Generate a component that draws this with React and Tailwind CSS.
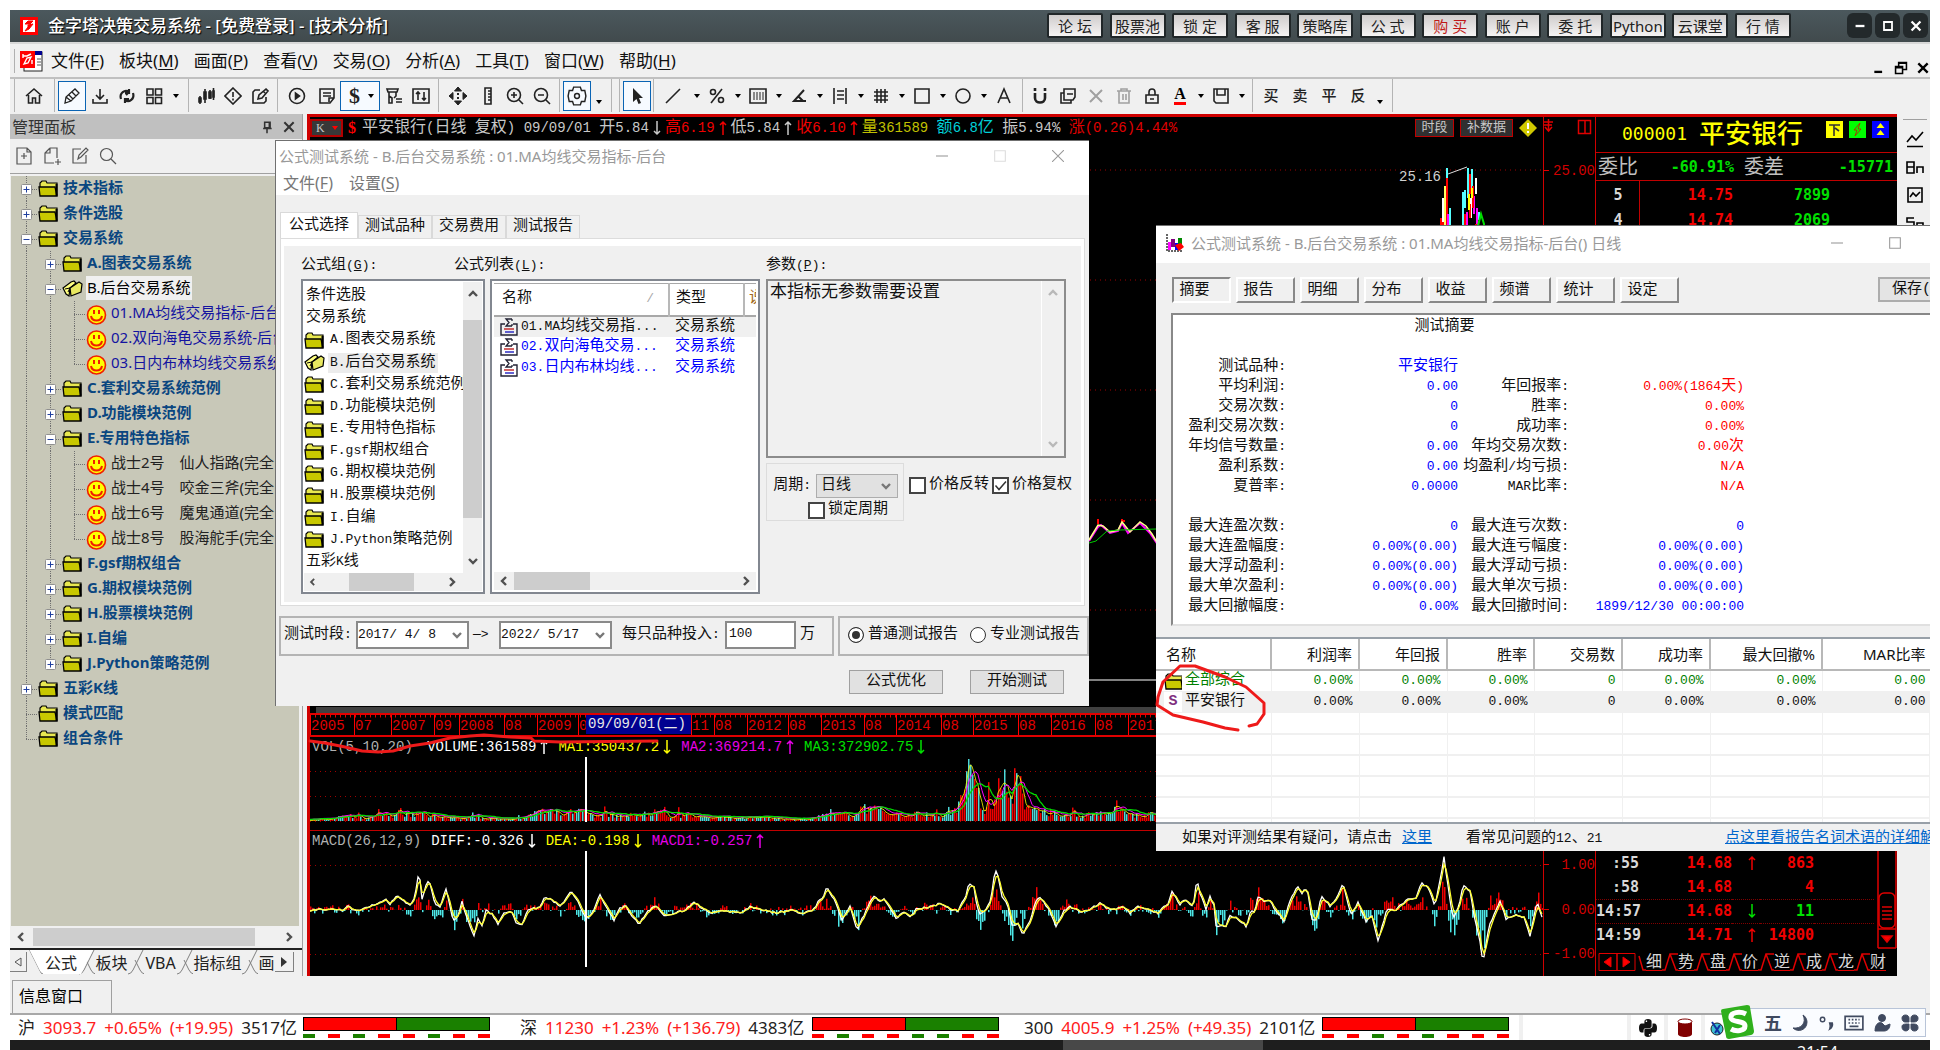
import React, { useState } from 'react';
import clsx from 'clsx';

/* ---------- text helpers ---------- */

// latin text keeps the parent's mono size, CJK runs get their own size
const T = ({ s, cjk = 'text-[15px]' }) => (
  <>
    {s.split(/([\u3000-\u9fff\uff00-\uffef]+)/).map((part, i) =>
      i % 2 ? <span key={i} className={cjk}>{part}</span> : part
    )}
  </>
);

// "文件(F)" with the access key underlined
const Key = ({ label, k }) => (
  <>{label}(<span className="underline underline-offset-2">{k}</span>)</>
);

/* ---------- icons ---------- */

const Ic = ({ children, className = 'w-[18px] h-[18px]', sw = 1.6 }) => (
  <svg viewBox="0 0 18 18" className={className} fill="none" stroke="currentColor" strokeWidth={sw}>
    {children}
  </svg>
);

const Caret = () => (
  <svg viewBox="0 0 8 8" className="w-2 h-2"><path d="M1 2h6L4 6z" /></svg>
);

const Chevron = ({ dir, className = 'text-[#505050]' }) => {
  const d = {
    left: 'M8 2L4 6l4 4',
    right: 'M4 2l4 4-4 4',
    up: 'M2 8l4-4 4 4',
    down: 'M2 4l4 4 4-4',
  }[dir];
  return (
    <svg viewBox="0 0 12 12" className={clsx('w-3 h-3', className)} fill="none" stroke="currentColor" strokeWidth="2.4">
      <path d={d} />
    </svg>
  );
};

const Folder = () => (
  <svg viewBox="0 0 21 17" className="w-[21px] h-[17px] shrink-0">
    <path d="M2 8V3l2-2h4l1 2h10v12H3z" fill="#e8e850" stroke="#000" strokeWidth="1.2" />
    <path d="M1 7h16l2 9H2z" fill="#c8c800" stroke="#000" strokeWidth="1.3" />
    <path d="M18.500 4v12" stroke="#000" strokeWidth="2" />
  </svg>
);

const FolderOpen = () => (
  <svg viewBox="0 0 21 17" className="w-[21px] h-[17px] shrink-0">
    <path d="M1 8l8-6 3-1 2 2-6 5-1 8-3-2z" fill="#ffff80" stroke="#000" strokeWidth="1.2" />
    <path d="M8 8l9-6 3 2-1 8-10 4z" fill="#e8e860" stroke="#000" strokeWidth="1.2" />
    <path d="M3 9l5-1M6 12l2-4" stroke="#000" />
  </svg>
);

const Smiley = () => (
  <svg viewBox="0 0 21 21" className="w-[21px] h-[21px] shrink-0 mt-1">
    <circle cx="10.5" cy="10" r="9" fill="#ffff00" stroke="#f02000" strokeWidth="1.6" />
    <path d="M8 5v4M13 5v4M5 11c1 6 10 6 11 0" stroke="#f02000" strokeWidth="2" fill="none" />
  </svg>
);

const Sigma = () => (
  <svg viewBox="0 0 18 18" className="w-[18px] h-[18px] shrink-0" fill="none">
    <path d="M5 6H1v11h16V6h-4" stroke="#223" strokeWidth="1.4" />
    <path d="M12 1H6l3 3.500L6 8h6M12 1v2M12 8V6" stroke="#223" strokeWidth="1.3" />
    <path d="M4 11h10" stroke="#c02020" strokeWidth="1.4" />
    <path d="M5 14h9" stroke="#2020c0" strokeWidth="1.4" />
  </svg>
);

const icons = {
  home: <Ic><path d="M1 9l8-7 8 7M3.500 8v8h4v-5h3v5h4V8" /></Ic>,
  pen: <Ic sw={1.3}><path d="M2 16l1-6 9-8 4 4-8 8zM3 10l5 4M6 8l4 4M9 5l4 4" /></Ic>,
  down: <Ic><path d="M9 2v10M5 8l4 4 4-4M2 12v4h14v-4" /></Ic>,
  sync: <Ic sw={2.2}><path d="M3 12C1 6 7 2 11 5M11 2v4H7M15 6c2 6-4 10-8 7M7 16v-4h4M8 8l3-3" /></Ic>,
  grid: <Ic><path d="M2 2h6v6H2zM10.500 2h6v6h-6zM2 10.500h6v6H2zM10.500 10.500h6v6h-6z" /></Ic>,
  candle: <Ic><path d="M3 9v8M8 2v14M13 3v9M16.500 1v12" /><path d="M2 11h2v4H2zM7 5h2v7H7zM12 5h2v6h-2zM16 4h1v6h-1z" fill="currentColor" /></Ic>,
  alert: <Ic><path d="M9 1l8 8-8 8-8-8zM9 5v5M9 11.500v2" /></Ic>,
  edit: <Ic><path d="M9 3H4L2 5v11h11l2-2v-4M7 12l1-4 7-6 2 2-6 7zM12 4l2 2" /></Ic>,
  play: <Ic><circle cx="9" cy="9" r="7.500" /><path d="M7.500 6v6l4-3z" fill="currentColor" /></Ic>,
  note: <Ic><path d="M2 2h14v9l-4 5H2zM5 6h8M5 9h8M11 15v-4h5" /></Ic>,
  filter: <Ic><path d="M2 2h11l-1 3H3zM4 5v4l3 2v5H4V9M11 5v4l-2 2M11 12h6M11 15h6" /></Ic>,
  sort: <Ic><path d="M1 2h16v14H1zM6 13V5M4 7l2-2 2 2M12 5v8M10 11l2 2 2-2" /></Ic>,
  move: (
    <Ic sw={1}>
      <path d="M9 0l3.500 4h-7zM9 18l3.500-4h-7zM0 9l4-3.500v7zM18 9l-4-3.500v7z" fill="currentColor" />
      <path d="M8 6h2v2H8zM8 10h2v2H8z" fill="currentColor" stroke="none" />
    </Ic>
  ),
  ruler: <Ic><path d="M6 1h6v16H6zM9 4h3M9 7h3M9 10h3M9 13h3" /></Ic>,
  zin: <Ic><circle cx="8" cy="8" r="6.500" /><path d="M8 5v6M5 8h6M13 13l4 4" /></Ic>,
  zout: <Ic><circle cx="8" cy="8" r="6.500" /><path d="M5 8h6M13 13l4 4" /></Ic>,
  gear: <Ic className="w-5 h-5" sw={1.3}><path d="M6 1h6l1 3 3 0 1 5-1 5-3 0-1 3H6l-1-3-3 0-1-5 1-5 3 0z" /><circle cx="9" cy="9" r="2.200" /></Ic>,
  cursor: <Ic><path d="M5 1v14l3.500-3 2 5 2.500-1-2-5h4z" fill="currentColor" stroke="none" /></Ic>,
  line: <Ic><path d="M2 16L16 2" /></Ic>,
  percent: <Ic><path d="M3 16L14 2" /><circle cx="5" cy="5" r="2.500" /><circle cx="13" cy="13" r="2.500" /></Ic>,
  bars: <Ic><path d="M1 2h16v14H1z" /><path d="M5 5v8M8 5v8M11 5v8M14 5v8" strokeWidth="1" /></Ic>,
  angle: <Ic sw={2}><path d="M14 3L4 14h12M8 9l5 5" /></Ic>,
  levels: <Ic><path d="M3 1v16M15 1v16M6 4h7M6 8h7M6 12h7" /></Ic>,
  hash: <Ic><path d="M5 2v14M9 2v14M13 2v14M2 5h14M2 9h14M2 13h14" /></Ic>,
  rect: <Ic><path d="M2 2h14v14H2z" /></Ic>,
  circle: <Ic><circle cx="9" cy="9" r="7" /></Ic>,
  text: <Ic><path d="M3 16L9 2l6 14M5 11h8" /></Ic>,
  magnet: <Ic sw={2.6}><path d="M4 6v5c0 6 10 6 10 0V6M4 1v3M14 1v3" /></Ic>,
  copy: <Ic><path d="M5 6H2v10h10v-3" /><path d="M5 2h11v8l-2 3H5zM8 7h6" /></Ic>,
  cross: <Ic sw={2}><path d="M3 3l12 12M15 3L3 15" /></Ic>,
  trash: <Ic><path d="M2 4h14M6 4V2h6v2M4 4v12h10V4M8 7v6M11 7v6" /></Ic>,
  lock: <Ic><path d="M3 8h12v8H3zM6 8V5c0-4 6-4 6 0v3M7 12h4" /></Ic>,
  save: <Ic><path d="M2 2h14v14H4l-2-2zM5 2v6h8V2" /></Ic>,
};

/* ---------- top bars ---------- */

const TITLE_BUTTONS = ['论 坛', '股票池', '锁 定', '客 服', '策略库', '公 式', '购 买', '账 户', '委 托', 'Python', '云课堂', '行 情'];

const TitleBar = () => (
  <header className="flex h-[34px] shrink-0 items-center border-b-2 border-[#d8d8d8] bg-linear-to-b from-[#4b585d] to-[#414a4d] pb-px pl-2.5 pr-0.5">
    <svg viewBox="0 0 18 18" className="w-[18px] h-[18px]">
      <rect width="18" height="18" fill="#f00" />
      <rect x="3" y="3" width="12" height="12" fill="#fff" />
      <path d="M5 7l3-3 5 0-3 3zM5 14l3-4 0-2 5-1-4 5z" fill="#f00" stroke="#f00" />
    </svg>
    <h1 className="ml-2.5 text-[17px] font-medium leading-8 text-white [text-shadow:1px_1px_1px_#000]">
      金字塔决策交易系统 - [免费登录] - [技术分析]
    </h1>
    <div className="ml-auto flex w-[744px] justify-between">
      {TITLE_BUTTONS.map((t) => (
        <button
          key={t}
          className={clsx(
            'h-[25px] w-14 overflow-hidden rounded-xs border-2 border-[#202628] bg-linear-to-b from-[#cfcccc] to-[#f6f4f4] text-[15px] leading-5 whitespace-nowrap',
            t === '购 买' ? 'text-[#c01818]' : 'text-[#222]'
          )}
        >
          {t}
        </button>
      ))}
    </div>
    <div className="ml-14 flex gap-[3px] text-white">
      <button aria-label="最小化" className="flex h-[25px] w-[25px] items-center justify-center rounded-md bg-[#23292b]">
        <Ic className="w-4 h-4" sw={2.6}><path d="M4 9h10" /></Ic>
      </button>
      <button aria-label="最大化" className="flex h-[25px] w-[25px] items-center justify-center rounded-md bg-[#23292b]">
        <Ic className="w-4 h-4" sw={2}><path d="M4.500 4.500h9v9h-9z" /></Ic>
      </button>
      <button aria-label="关闭" className="flex h-[25px] w-[25px] items-center justify-center rounded-md bg-[#23292b]">
        <Ic className="w-4 h-4" sw={2.6}><path d="M4 4l10 10M14 4L4 14" /></Ic>
      </button>
    </div>
  </header>
);

const MENUS = [['文件', 'F'], ['板块', 'M'], ['画面', 'P'], ['查看', 'V'], ['交易', 'O'], ['分析', 'A'], ['工具', 'T'], ['窗口', 'W'], ['帮助', 'H']];

const MenuBar = () => (
  <nav className="flex h-[35px] shrink-0 items-center border-b-2 border-[#c0c0c0] pl-1">
    <div className="h-6 w-px bg-[#b0b0b0]" />
    <svg viewBox="0 0 24 22" className="ml-1 w-6 h-[22px]">
      <rect x="5" y="2" width="18" height="19" fill="#fff" stroke="#222" />
      <rect x="5" y="1" width="18" height="4" fill="#000090" />
      <rect x="1" y="1" width="15" height="17" fill="#f00" />
      <path d="M4 6h4l4-2M5 14l3-6 4-1-3 6zM4 4v4M13 10v4" stroke="#fff" strokeWidth="1.4" fill="none" />
      <path d="M18 9h4M18 12h4M18 15h4" stroke="#555" />
    </svg>
    <div className="ml-2 flex gap-[15px] text-[17px] leading-6 text-[#111]">
      {MENUS.map(([label, k]) => (
        <button key={k}><Key label={label} k={k} /></button>
      ))}
    </div>
    <div className="ml-auto flex items-end gap-2 self-end pb-0.5">
      <Ic className="w-3.5 h-3.5" sw={3}><path d="M3 14h10" /></Ic>
      <Ic className="w-3.5 h-3.5" sw={2}><path d="M6 6V2h10v9h-4M2 7h9v9H2zM2 8.500h9M6 3h10" /></Ic>
      <Ic className="w-3.5 h-3.5" sw={3}><path d="M3 3l12 12M15 3L3 15" /></Ic>
    </div>
  </nav>
);

const Sep = ({ w = 'w-2' }) => (
  <div className={clsx('flex shrink-0 self-stretch justify-center', w)}><div className="w-px bg-[#b4b4b4]" /></div>
);
const Tool = ({ name, on, off, w = 'w-[27px]' }) => (
  <button
    aria-label={name}
    className={clsx('flex h-[30px] shrink-0 items-center justify-center', w, on && 'border border-[#0a64b4] bg-[#f6faff]', off && 'text-[#a0a0a0]')}
  >
    {icons[name]}
  </button>
);
const Drop = ({ w = 'w-[13px]', low }) => (
  <span className={clsx('flex shrink-0 justify-center', w, low && 'mt-3')}><Caret /></span>
);

const Toolbar = () => (
  <div className="flex h-[35px] shrink-0 items-center pb-0.5 text-[#222]">
    <Sep />
    <Tool name="home" w="w-8" />
    <Sep />
    <Tool name="pen" w="w-7" on />
    <Tool name="down" />
    <Tool name="sync" />
    <Tool name="grid" w="w-7" />
    <Drop w="w-4" />
    <Sep />
    <Tool name="candle" />
    <Tool name="alert" />
    <Tool name="edit" />
    <Sep />
    <Tool name="play" w="w-8" />
    <Tool name="note" />
    <button aria-label="交易" className="flex h-[30px] w-10 shrink-0 items-center justify-between border border-[#0a64b4] bg-[#f6faff] pl-2 pr-1 font-['Liberation_Serif','Noto_Sans_CJK_SC',serif] text-[22px] font-bold leading-7">
      $<Caret />
    </button>
    <Tool name="filter" />
    <Tool name="sort" />
    <Sep />
    <Tool name="move" w="w-8" />
    <Tool name="ruler" />
    <Tool name="zin" />
    <Tool name="zout" />
    <Sep />
    <Tool name="gear" w="w-7" on />
    <Drop w="w-4" low />
    <Sep />
    <Sep />
    <Tool name="cursor" w="w-7" on />
    <Sep w="w-1" />
    <Tool name="line" w="w-9" />
    <Drop w="w-3" />
    {['percent', 'bars', 'angle', 'levels', 'hash', 'rect', 'circle'].map((n) => (
      <React.Fragment key={n}>
        <Tool name={n} w="w-7" />
        <Drop />
      </React.Fragment>
    ))}
    <Tool name="text" w="w-7" />
    <Sep />
    <Tool name="magnet" w="w-7" />
    <Tool name="copy" w="w-7" />
    <Tool name="cross" w="w-7" off />
    <Tool name="trash" w="w-7" off />
    <Tool name="lock" w="w-7" />
    <button aria-label="颜色" className="flex w-7 shrink-0 justify-center">
      <span className="border-b-3 border-[#f00] font-['Liberation_Serif','Noto_Sans_CJK_SC',serif] text-base font-bold leading-4 text-black">A</span>
    </button>
    <Drop />
    <Tool name="save" w="w-7" />
    <Drop />
    <Sep />
    {['买', '卖', '平', '反'].map((t) => (
      <button key={t} className="ml-px w-7 shrink-0 text-[15px] font-medium">{t}</button>
    ))}
    <Drop w="w-4" low />
    <Sep />
  </div>
);

/* ---------- left panel ---------- */

const TREE = [
  { d: 0, t: '技术指标', x: '+' },
  { d: 0, t: '条件选股', x: '+' },
  { d: 0, t: '交易系统', x: '-' },
  { d: 1, t: 'A.图表交易系统', x: '+' },
  { d: 1, t: 'B.后台交易系统', x: '-', open: true },
  { d: 2, t: '01.MA均线交易指标-后台', blue: true },
  { d: 2, t: '02.双向海龟交易系统-后台', blue: true },
  { d: 2, t: '03.日内布林均线交易系统', blue: true, last: true },
  { d: 1, t: 'C.套利交易系统范例', x: '+' },
  { d: 1, t: 'D.功能模块范例', x: '+' },
  { d: 1, t: 'E.专用特色指标', x: '-' },
  { d: 2, t: '战士2号　仙人指路(完全' },
  { d: 2, t: '战士4号　咬金三斧(完全' },
  { d: 2, t: '战士6号　魔鬼通道(完全' },
  { d: 2, t: '战士8号　股海舵手(完全', last: true },
  { d: 1, t: 'F.gsf期权组合', x: '+' },
  { d: 1, t: 'G.期权模块范例', x: '+' },
  { d: 1, t: 'H.股票模块范例', x: '+' },
  { d: 1, t: 'I.自编', x: '+' },
  { d: 1, t: 'J.Python策略范例', x: '+', last: true },
  { d: 0, t: '五彩K线', x: '+' },
  { d: 0, t: '模式匹配' },
  { d: 0, t: '组合条件', last: true },
];

const Branch = ({ x, last, pass }) => (
  <svg className="w-6 h-[25px] shrink-0" fill="none" stroke="#707070" strokeDasharray="1 1">
    <path d={`M12.500 0V${last ? 13 : 25}${pass ? '' : 'M12 13.500h12'}`} />
    {x && (
      <g strokeDasharray="none">
        <rect x="7.500" y="8.500" width="10" height="10" rx="1" fill="#fff" stroke="#909090" />
        <path d={x === '+' ? 'M9.500 13.500h6M12.500 10.500v6' : 'M9.500 13.500h6'} stroke="#2040a0" />
      </g>
    )}
  </svg>
);

const Tree = () => (
  <ul className="min-h-0 flex-1 overflow-hidden bg-[#c8c8b8] pl-[3px] text-[15px] leading-[22px]">
    {TREE.map((n) => (
      <li key={n.t} className="flex h-[25px] whitespace-nowrap">
        {Array.from({ length: n.d }, (_, i) => <Branch key={i} pass />)}
        <Branch x={n.x} last={n.last} />
        <span className="flex w-[21px] items-center">{n.d === 2 ? <Smiley /> : n.open ? <FolderOpen /> : <Folder />}</span>
        <span
          className={clsx(
            'ml-[3px] h-6 px-px',
            n.open && 'bg-[#f0f0f0] text-black',
            !n.open && n.d < 2 && 'font-bold text-[#0a4680]',
            n.blue && 'text-[#1414a0]',
            n.d === 2 && !n.blue && 'text-[#222]'
          )}
        >
          {n.t}
        </span>
      </li>
    ))}
  </ul>
);

const Slash = ({ first }) => (
  <svg className="w-4 h-[25px] shrink-0" fill="none" stroke="#808080">
    {!first && <path d="M15 0L5 20q-2 4-5 4" />}
    <path d={first ? 'M2 0l10 20q2 4 4 4' : 'M7 10l5 10q2 4 5 4'} />
  </svg>
);

const SidePanel = () => (
  <aside className="flex w-[293px] shrink-0 flex-col border-r border-[#a0a0a0]">
    <div className="flex h-[25px] items-center bg-[#c0c0c0] pl-0.5 text-[#333]">
      <span className="text-base leading-6">管理面板</span>
      <button aria-label="固定" className="ml-auto mr-2"><Ic className="w-3.5 h-3.5" sw={2}><path d="M6 3h7v7H6zM4 11h11M9 11v6M12 3v7" /></Ic></button>
      <button aria-label="关闭" className="mr-1.5"><Ic className="w-3.5 h-3.5" sw={2.6}><path d="M3 3l12 12M15 3L3 15" /></Ic></button>
    </div>
    <div className="flex h-[35px] items-center gap-2.5 border-b border-[#a0a0a0] pb-px pl-[5px] text-[#555]">
      <Ic sw={1.2}><path d="M2 1h10l4 4v12H2zM12 1v4h4M9 6v6M6 9h6" /></Ic>
      <Ic sw={1.2}><path d="M7 1h7v10M7 1L2 6v10h9M7 1v5H2M15 12v6M12 15h6" /></Ic>
      <Ic sw={1.2}><path d="M10 2H2v14h13V8M7 12l1-4 7-7 2 2-7 7z" /></Ic>
      <Ic sw={1.2}><circle cx="7.500" cy="7.500" r="6" /><path d="M12 12l5 5" /></Ic>
    </div>
    <div className="mx-px mt-0.5 flex min-h-0 flex-1 flex-col pr-0.5">
      <Tree />
      <div className="flex h-[22px] items-center gap-1.5 px-1">
        <Chevron dir="left" />
        <div className="h-[18px] w-[222px] bg-[#cdcdcd]" />
        <span className="ml-auto"><Chevron dir="right" /></span>
      </div>
    </div>
    <div className="flex h-[28px] items-start overflow-hidden border-t-2 border-[#222] text-base leading-6 text-[#222]">
      <button aria-label="向左" className="mt-0.5 flex h-5 w-[17px] shrink-0 items-center justify-center border-b border-r border-[#808080]">
        <svg viewBox="0 0 8 10" className="w-2 h-2.5" fill="none" stroke="#555"><path d="M7 1v8L1 5z" /></svg>
      </button>
      <div className="flex bg-white [clip-path:polygon(2px_0,66px_0,54px_24px,14px_24px)]">
        <Slash first />
        <button className="w-9">公式</button>
        <span className="w-4" />
      </div>
      <span className="-ml-4 flex">
        <Slash />
        <button className="w-[33px]">板块</button>
        <Slash />
        <button className="w-[33px]">VBA</button>
        <Slash />
        <button className="w-[49px]">指标组</button>
        <Slash />
        <button className="w-[17px] overflow-hidden">画</button>
      </span>
      <button aria-label="向右" className="mt-0.5 flex h-5 w-[19px] shrink-0 items-center justify-center border-b border-r border-[#808080]">
        <svg viewBox="0 0 8 10" className="w-2 h-2.5"><path d="M1 0v10l6-5z" fill="#333" /></svg>
      </button>
    </div>
  </aside>
);

/* ---------- charts ---------- */

const makeRand = (seed) => () => {
  seed = (seed * 16807) % 2147483647;
  return seed / 2147483647;
};

const sample = (pts, x) => {
  for (let i = 1; i < pts.length; i++) {
    if (x <= pts[i][0]) {
      const [x0, y0] = pts[i - 1];
      const [x1, y1] = pts[i];
      return y0 + ((y1 - y0) * (x - x0)) / (x1 - x0);
    }
  }
  return pts[pts.length - 1][1];
};

const toLine = (arr, step, f) => arr.map((v, i) => `${i * step},${f(v).toFixed(1)}`).join(' ');
const movingAvg = (arr, n) => arr.map((_, i) => {
  const s = arr.slice(Math.max(0, i - n + 1), i + 1);
  return s.reduce((a, b) => a + b, 0) / s.length;
});

const VOL_PTS = [[0, 1], [20, 2], [30, 5], [38, 9], [45, 6], [55, 3], [72, 8], [90, 8], [110, 11], [125, 6], [150, 4], [162, 5], [190, 2], [210, 3], [220, 10], [230, 14], [240, 12], [255, 13], [272, 11], [282, 7], [310, 8], [330, 8], [345, 13], [362, 5], [380, 9], [395, 4], [430, 4], [450, 5], [480, 2], [503, 3], [520, 11], [530, 13], [542, 7], [552, 16], [562, 19], [572, 14], [590, 7], [610, 9], [630, 7], [643, 12], [650, 24], [657, 60], [665, 42], [675, 14], [685, 28], [692, 54], [700, 36], [707, 58], [714, 20], [730, 13], [750, 10], [770, 6], [792, 12], [810, 14], [822, 7], [846, 9], [1233, 14]];

const MACD_PTS = [[310, 909], [330, 908], [342, 909], [348, 905], [352, 908], [360, 910], [370, 905], [380, 902], [386, 899], [390, 903], [397, 895], [403, 900], [410, 905], [415, 895], [419, 869], [422, 898], [427, 880], [430, 882], [435, 904], [440, 906], [446, 888], [450, 905], [453, 920], [458, 915], [462, 900], [465, 912], [470, 925], [474, 934], [478, 918], [482, 925], [486, 910], [492, 913], [498, 923], [504, 912], [512, 911], [516, 922], [522, 923], [528, 909], [540, 906], [545, 896], [552, 899], [560, 905], [565, 899], [571, 891], [577, 898], [582, 910], [587, 918], [592, 912], [600, 894], [606, 905], [614, 919], [620, 907], [626, 905], [632, 915], [639, 923], [648, 910], [656, 905], [664, 914], [675, 912], [685, 909], [694, 901], [704, 909], [712, 912], [720, 910], [740, 912], [750, 906], [760, 908], [775, 912], [795, 909], [801, 914], [810, 909], [815, 908], [818, 901], [823, 896], [827, 886], [831, 894], [835, 900], [842, 920], [850, 905], [857, 929], [865, 912], [873, 895], [880, 900], [884, 898], [890, 907], [896, 917], [905, 911], [911, 916], [916, 908], [935, 905], [940, 902], [950, 908], [958, 910], [963, 900], [966, 895], [969, 882], [974, 886], [977, 905], [980, 913], [985, 910], [990, 900], [993, 885], [995, 868], [998, 875], [1002, 895], [1008, 905], [1012, 925], [1018, 923], [1023, 933], [1030, 920], [1035, 902], [1040, 896], [1045, 903], [1050, 910], [1056, 925], [1064, 910], [1070, 906], [1082, 911], [1092, 907], [1100, 902], [1107, 908], [1115, 909], [1123, 905], [1130, 912], [1138, 906], [1150, 909], [1158, 912], [1163, 906], [1169, 902], [1171, 890], [1175, 895], [1179, 904], [1185, 898], [1193, 906], [1197, 878], [1200, 892], [1206, 908], [1210, 895], [1214, 905], [1216, 925], [1226, 925], [1230, 914], [1238, 918], [1247, 926], [1250, 911], [1255, 910], [1258, 896], [1264, 900], [1270, 899], [1275, 909], [1284, 920], [1290, 900], [1297, 885], [1302, 892], [1307, 887], [1312, 918], [1317, 918], [1321, 895], [1330, 905], [1336, 898], [1343, 882], [1351, 915], [1358, 902], [1366, 920], [1372, 915], [1378, 940], [1387, 908], [1395, 910], [1403, 902], [1409, 898], [1416, 897], [1421, 882], [1428, 886], [1435, 905], [1440, 880], [1444, 856], [1448, 885], [1453, 918], [1459, 905], [1463, 883], [1470, 890], [1474, 915], [1480, 940], [1483, 962], [1489, 925], [1500, 900], [1506, 918], [1515, 914], [1524, 917], [1530, 935], [1537, 900], [1543, 920]];

const Grid = ({ ys }) => ys.map((y) => (
  <line key={y} x1="0" x2="100%" y1={y} y2={y} stroke="#a00000" strokeDasharray="1 4" />
));

const PriceChart = () => (
  <svg className="min-h-0 w-full flex-1" fill="none">
    <Grid ys={[32, 142, 252, 362, 472]} />
    <g strokeWidth="2">
      <path d="M1131 100V80M1133 100V60M1137 100V38" stroke="#f00" />
      <path d="M1135 100V48M1140 100V84" stroke="#ffff60" />
      <path d="M1133 84V60M1161 80V60M1166 56V40" stroke="#fff" />
      <path d="M1137 40V30M1140 100V70M1153 88V54M1155 70V52M1158 60V30M1162 50V31M1169 82V74" stroke="#5ff" />
      <path d="M1138 90V76M1157 100V74M1164 76V58M1167 92V70" stroke="#f0f" />
      <path d="M1155 100V76M1160 56V36M1160 80V66M1163 70V48M1166 100V86" stroke="#f00" />
      <path d="M1159 72V56M1162 60V50M1153 100V90" stroke="#ff0" />
      <path d="M1168 88L1171 76L1174 86V100" stroke="#0d0" />
    </g>
    <path d="M1138 36L1157 29" stroke="#ddd" />
    <text x="1089" y="43" fill="#d0d0d0" fontSize="14" fontFamily="Liberation Mono, monospace">25.16</text>
    <path d="M779 403L788 389L791 387L800 395L808 393L812 385L818 395L830 385L835 390L840 395L848 407" stroke="#f0f" strokeWidth="2" />
    <path d="M788 386V381M812 384V381M814 384V382" stroke="#f00" strokeWidth="2" />
    <path d="M779 402L788 387L793 388L800 394L808 392L812 384L820 394L830 384L836 388L842 396L848 406" stroke="#ff8" strokeWidth="1.5" />
    <path d="M779 405L786 403L797 393L810 392L846 391" stroke="#0c0" />
    <path d="M0 542H1233" stroke="#808080" strokeWidth="2" />
  </svg>
);

const TICKS = [[0, '2005'], [44, '07'], [81, '2007'], [124, '09'], [149, '2008'], [194, '08'], [227, '2009'], [268, '0'], [381, '11'], [404, '08'], [437, '2012'], [478, '08'], [511, '2013'], [554, '08'], [586, '2014'], [631, '08'], [663, '2015'], [708, '08'], [741, '2016'], [785, '08'], [818, '2017']];

const TimeAxis = () => (
  <svg className="h-[24px] w-full shrink-0 border-y-2 border-[#e00000]">
    <line x1="0" x2="100%" y1="1" y2="1" stroke="#e00000" strokeWidth="3" strokeDasharray="1 4" />
    {TICKS.map(([x, t]) => (
      <g key={x}>
        <line x1={x + 0.5} x2={x + 0.5} y1="0" y2="20" stroke="#f00" />
        <text x={x + 1} y="15" fill="#e00000" fontSize="14" fontFamily="Liberation Mono, monospace">{t}</text>
      </g>
    ))}
    <rect x="276" y="0" width="105" height="19" fill="#000090" />
    <text x="278" y="13" fill="#e8e8e8" fontSize="14" fontFamily="Liberation Mono, Noto Sans CJK SC, monospace">09/09/01(二)</text>
  </svg>
);

const VolumeChart = () => {
  const rand = makeRand(77);
  const vols = Array.from({ length: 617 }, (_, i) => {
    const base = sample(VOL_PTS, i * 2);
    const spike = rand() > 0.95 ? 2 : 1;
    return Math.min(62, base * (0.4 + rand() * 0.7) * spike);
  });
  return (
    <svg className="h-[74px] w-full shrink-0 border-b border-[#c00000]">
      <Grid ys={[14.5, 39.5, 64.5]} />
      {vols.map((v, i) => (
        <rect key={i} x={i * 2} y={64 - v} width="1.500" height={v} fill={rand() > 0.45 ? '#f00000' : '#4dd8d8'} />
      ))}
      <polyline points={toLine(movingAvg(vols, 3), 2, (v) => 64 - v)} fill="none" stroke="#ff0" strokeWidth="0.8" />
      <polyline points={toLine(movingAvg(vols, 6), 2, (v) => 63 - v)} fill="none" stroke="#f0f" />
      <polyline points={toLine(movingAvg(vols, 12), 2, (v) => 63 - v)} fill="none" stroke="#0d0" strokeWidth="1.3" />
      <path d="M276 0V65" stroke="#fff" strokeWidth="2" />
    </svg>
  );
};

const MacdChart = () => {
  const rand = makeRand(9);
  const diff = Array.from({ length: 617 }, (_, i) => 909 - sample(MACD_PTS, 310 + i * 2) + (rand() - 0.5) * 2);
  const dea = [];
  diff.forEach((v, i) => dea.push(i ? dea[i - 1] + (v - dea[i - 1]) * 0.6 : v));
  let slow = 0;
  const hist = diff.map((v) => {
    slow += (v - slow) * 0.2;
    return (v - slow) * 1.2 * (0.2 + rand() * 1.2) + (rand() - 0.5) * 9;
  });
  return (
    <svg className="h-[125px] w-full shrink-0">
      <Grid ys={[14.5, 103.5]} />
      {hist.map((h, i) => (
        <rect key={i} x={i * 2} y={h > 0 ? 59 - h : 59} width="1.500" height={Math.abs(h)} fill={h > 0 ? '#f00000' : '#4de8e8'} />
      ))}
      <polyline points={toLine(diff, 2, (v) => 59 - v)} fill="none" stroke="#fff" strokeWidth="1.300" />
      <polyline points={toLine(dea, 2, (v) => 59 - v)} fill="none" stroke="#ffff30" strokeWidth="1.300" />
      <path d="M276 0V116" stroke="#fff" strokeWidth="2" />
    </svg>
  );
};

const Arrow = ({ dir, className }) => (
  <svg viewBox="0 0 16 16" className={clsx('h-4 w-4 shrink-0', className)} fill="none" stroke="currentColor" strokeWidth="1.500">
    <path d={dir === '↑' ? 'M8 15V2M5 5l3-3 3 3' : 'M8 1v13M5 11l3 3 3-3'} />
  </svg>
);

const Stat = ({ s, arrow, c }) => (
  <span className={clsx('flex items-center', c)}>
    <span className="whitespace-pre"><T s={s} cjk="text-base" /></span>
    {arrow && <Arrow dir={arrow} />}
  </span>
);

const ChartHeader = () => (
  <div className="flex h-[21px] shrink-0 items-center text-sm leading-5 text-[#c8c8c8]">
    <button className="flex h-[18px] w-[33px] items-center justify-between border-2 border-[#b00000] bg-[#383838] pl-1 font-['Liberation_Serif','Noto_Sans_CJK_SC',serif] text-xs">
      K<svg viewBox="0 0 8 8" className="w-3 h-2"><path d="M1 2h6L4 6z" fill="#f00" /></svg>
    </button>
    <span className="ml-[5px] mr-1.5 font-['Liberation_Serif','Noto_Sans_CJK_SC',serif] text-base font-bold text-[#f00]">$</span>
    <Stat s="平安银行(日线 复权) 09/09/01 " />
    <Stat s="开5.84" arrow="↓" />
    <Stat s="高6.19" arrow="↑" c="text-[#f00000]" />
    <Stat s="低5.84" arrow="↑" />
    <Stat s="收6.10" arrow="↑" c="text-[#f00000]" />
    <Stat s="量361589 " c="text-[#c0c000]" />
    <Stat s="额6.8亿 " c="text-[#00d0d8]" />
    <Stat s="振5.94% " />
    <Stat s="涨(0.26)4.44%" c="text-[#e00000]" />
    <div className="ml-auto flex items-center gap-1.5 pr-1.5">
      <button className="h-[18px] w-[39px] border border-[#c00000] bg-[#303030] text-[13px] leading-4">时段</button>
      <button className="h-[18px] w-[53px] border border-[#c00000] bg-[#303030] text-[13px] leading-4">补数据</button>
      <svg viewBox="0 0 18 18" className="w-[18px] h-[18px]"><path d="M9 0l9 9-9 9-9-9z" fill="#d0c800" /><path d="M9 4v6M9 12v2" stroke="#fff" strokeWidth="2" /></svg>
    </div>
  </div>
);

const Axis = () => (
  <div className="w-[53px] shrink-0 border-x border-[#d00000]">
    <svg className="h-full w-full" fill="none" stroke="#e00000">
      <path d="M0 5h9M0 8h8M4.500 2v12M1 10l3.500 4L8 10M34.500 3.500h12v13h-12zM41 3v13" strokeWidth="1.500" />
      <path d="M0 53.500h5M0 747.500h5M0 792.500h5M0 836.500h5" />
      <g fill="#d00000" stroke="none" fontSize="14" fontFamily="Liberation Mono, monospace" textAnchor="end">
        <text x="51" y="58">25.00</text>
        <text x="51" y="752">1.00</text>
        <text x="51" y="797">0.00</text>
        <text x="51" y="841">-1.00</text>
      </g>
    </svg>
  </div>
);

const DEALS = [
  [':55', '14.68', '↑', '863', 'text-[#f00000]'],
  [':58', '14.68', '', '4', 'text-[#f00000]'],
  ['14:57', '14.68', '↓', '11', 'text-[#00e000]'],
  ['14:59', '14.71', '↑', '14800', 'text-[#f00000]'],
];

const QuotePanel = () => (
  <section className="flex w-[301px] shrink-0 flex-col font-['DejaVu_Sans_Mono','Noto_Sans_CJK_SC',monospace] text-[15px] font-bold leading-5 text-[#d8d8d8]">
    <div className="flex h-9 items-center border-b border-[#c00000] pb-px pl-[26px] text-[#ffff00]">
      <span className="text-lg font-normal">000001</span>
      <span className="ml-3 text-[26px] font-medium leading-8">平安银行</span>
      <div className="mb-2.5 ml-auto mr-2 flex gap-1.5">
        <svg viewBox="0 0 17 17" className="w-[17px] h-[17px]"><path d="M0 0h17v17H0z" fill="#ff0" /><path d="M3 4h11M8 4v11M9 7l4 3" stroke="#333" strokeWidth="1.6" /></svg>
        <svg viewBox="0 0 17 17" className="w-[17px] h-[17px]"><path d="M0 0h17v17H0z" fill="#0f0" /><path d="M11 2L5 9h3l-2 6 6-7H9z" stroke="#a04000" fill="none" /></svg>
        <svg viewBox="0 0 17 17" className="w-[17px] h-[17px]"><path d="M0 0h17v17H0z" fill="#00f" /><path d="M8.500 2l4 5h-8zM8.500 9l4 5h-8z" fill="#ff0" /></svg>
      </div>
    </div>
    <div className="flex h-7 items-center border-b border-[#c00000] pl-0.5 text-[#00e000]">
      <span className="text-xl font-normal leading-6 text-[#c0c0c0]">委比</span>
      <span className="w-24 text-right">-60.91%</span>
      <span className="ml-2.5 text-xl font-normal leading-6 text-[#c0c0c0]">委差</span>
      <span className="ml-auto mr-1">-15771</span>
    </div>
    <table className="table-fixed">
      <tbody>
        {[['5', '14.75', '7899'], ['4', '14.74', '2069']].map(([n, p, v]) => (
          <tr key={n} className="h-[25px] text-right">
            <td className="w-[43px] border-r border-[#c00000] pr-4 pt-0.5">{n}</td>
            <td className="w-[94px] pt-0.5 text-[#f00000]">{p}</td>
            <td className="w-[97px] pt-0.5 text-[#00e000]">{v}</td>
            <td />
          </tr>
        ))}
      </tbody>
    </table>
    <div className="flex-1" />
    <div className="flex">
      <table className="w-[278px] table-fixed self-start">
        <tbody>
          {DEALS.map(([t, p, a, v, c], i) => (
            <tr key={i} className={clsx('h-[24px] text-right text-[#f00000]', i > 1 && 'border-t border-dotted border-[#800000]')}>
              <td className="w-[43px] text-[#d8d8d8]">{t}</td>
              <td className="w-[93px]">{p}</td>
              <td className={clsx('w-7', c)}>{a && <Arrow dir={a} className="ml-auto" />}</td>
              <td className={clsx('w-[54px]', c)}>{v}</td>
              <td />
            </tr>
          ))}
        </tbody>
      </table>
      <svg className="ml-auto h-[98px] w-5" fill="none" stroke="#e00000" strokeWidth="1.500">
        <path d="M1 0V97M19 0V97M1 78h18M1 97h18M5 56h10M5 60h10M5 64h10M5 68h10" />
        <rect x="2" y="42" width="16" height="35" rx="5" />
        <path d="M5 85h10l-5 6z" fill="#f00" />
      </svg>
    </div>
    <div className="mt-0.5 flex h-[22px] items-center pl-0.5 text-base font-normal">
      <svg className="h-[18px] w-[38px] shrink-0" fill="#f00" stroke="#e00000"><path d="M1 .5h18v17H1zM19 .5h18v17H19z" fill="none" /><path d="M13 4v10L6 9zM25 4v10l7-5z" /></svg>
      {['细', '势', '盘', '价', '逆', '成', '龙', '财'].map((t, i) => (
        <React.Fragment key={t}>
          <svg className={clsx('h-[18px] shrink-0', i ? 'w-4' : 'w-2.5')} fill="none" stroke="#e00000" strokeWidth="1.500">
            <path d={i ? 'M0 17h3L8 1h8M8 1l6 16h2' : 'M3 3l4 14h7'} />
          </svg>
          <button className="h-[18px] w-4 shrink-0 border-b border-[#e00000] leading-4">{t}</button>
        </React.Fragment>
      ))}
    </div>
    <div className="h-[3px]" />
  </section>
);

const ChartArea = () => (
  <main className="ml-1 flex min-w-0 flex-1 overflow-hidden border-l-3 border-t-3 border-[#d00000] bg-black font-['Liberation_Mono','Noto_Sans_CJK_SC',monospace]">
    <div className="flex min-w-0 flex-1 flex-col overflow-hidden">
      <ChartHeader />
      <PriceChart />
      <div className="ml-1.5 h-1.5 shrink-0 bg-[#404040]" />
      <TimeAxis />
      <div className="flex h-5 shrink-0 items-center gap-1.5 pl-0.5 text-sm leading-5">
        <Stat s="VOL(5,10,20) " c="text-[#b0b0b0]" />
        <Stat s="VOLUME:361589" arrow="↑" c="text-white" />
        <Stat s="MA1:350437.2" arrow="↓" c="text-[#ffff00]" />
        <Stat s="MA2:369214.7" arrow="↑" c="text-[#e800e8]" />
        <Stat s="MA3:372902.75" arrow="↓" c="text-[#00e000]" />
      </div>
      <VolumeChart />
      <div className="flex h-5 shrink-0 items-center gap-1.5 pl-0.5 text-sm leading-5">
        <Stat s="MACD(26,12,9)" c="mr-1 text-[#b0b0b0]" />
        <Stat s="DIFF:-0.326" arrow="↓" c="text-white" />
        <Stat s="DEA:-0.198" arrow="↓" c="text-[#ffff00]" />
        <Stat s="MACD1:-0.257" arrow="↑" c="text-[#e800e8]" />
      </div>
      <MacdChart />
    </div>
    <Axis />
    <QuotePanel />
  </main>
);

const RightStrip = () => (
  <div className="flex w-[33px] shrink-0 flex-col items-center gap-2.5 pl-0.5 pt-0.5">
    <div className="h-1 w-6 border-b border-[#a0a0a0]" />
    <Ic className="w-[18px] h-[18px]"><path d="M1 12l5-6 4 4 7-8M1 16.500h16" /></Ic>
    <Ic className="w-[18px] h-[18px]"><path d="M1 4h7v11H1zM1 9h7M11 15V9h6v6" /></Ic>
    <Ic className="w-[18px] h-[18px]"><path d="M2 2h14v14H2zM4 11l3-4 3 3 4-4" /></Ic>
    <Ic className="w-[18px] h-[18px]"><path d="M8 4H1v4h7v7H1M11 15V9h6v6" /></Ic>
  </div>
);

/* ---------- formula dialog ---------- */

const GROUPS = ['条件选股', '交易系统', 'A.图表交易系统', 'B.后台交易系统', 'C.套利交易系统范例', 'D.功能模块范例', 'E.专用特色指标', 'F.gsf期权组合', 'G.期权模块范例', 'H.股票模块范例', 'I.自编', 'J.Python策略范例', '五彩K线'];
const FORMULAS = ['01.MA均线交易指...', '02.双向海龟交易...', '03.日内布林均线...'];

const HScroll = ({ thumb, gap }) => (
  <div className={clsx('flex h-[18px] shrink-0 items-center bg-[#f0f0f0] px-1', gap)}>
    <Chevron dir="left" />
    <div className={clsx('h-[18px] bg-[#cdcdcd]', thumb)} />
    <span className="ml-auto"><Chevron dir="right" /></span>
  </div>
);

const DateBox = ({ label, value }) => (
  <span className="flex h-7 w-[113px] items-center border-2 border-[#8a8a8a] bg-white pr-1">
    <input aria-label={label} defaultValue={value} className="w-full min-w-0 bg-transparent text-[13px] outline-none" />
    <Chevron dir="down" className="shrink-0 text-[#777]" />
  </span>
);

const Check = ({ label, on }) => {
  const [v, setV] = useState(!!on);
  return (
    <label className="flex items-center gap-[3px] whitespace-nowrap text-[15px]">
      <span className="relative flex h-[17px] w-[17px]">
        <input type="checkbox" checked={v} onChange={() => setV(!v)} className="h-full w-full appearance-none border-2 border-[#444] bg-white" />
        {v && <svg viewBox="0 0 17 17" className="pointer-events-none absolute inset-0" fill="none" stroke="#333" strokeWidth="1.500"><path d="M3.500 8.500l3.500 4 7-8" /></svg>}
      </span>
      {label}
    </label>
  );
};

const Radio = ({ label, on }) => (
  <label className="flex items-center gap-1 whitespace-nowrap text-[15px]">
    <input
      type="radio"
      name="report"
      defaultChecked={on}
      className="h-4 w-4 appearance-none rounded-full border border-[#333] bg-white checked:border-[#333] checked:bg-[#333] checked:shadow-[inset_0_0_0_3px_#fff]"
    />
    {label}
  </label>
);

const FormulaDialog = () => {
  const [tab, setTab] = useState('公式选择');
  return (
    <section className="absolute left-[265px] top-[26px] flex h-[566px] w-[814px] flex-col border-l border-t border-[#707070] bg-[#f0f0f0] font-['Liberation_Mono','Noto_Sans_CJK_SC',monospace] text-[13px] leading-5 text-[#111]">
      <div className="bg-white font-['Noto_Sans','Noto_Sans_CJK_SC',sans-serif] text-[#999]">
        <div className="flex h-[31px] items-center pb-0.5 pl-[3px] pr-[25px] text-[15px]">
          <h2>公式测试系统 - B.后台交易系统 : 01.MA均线交易指标-后台</h2>
          <div className="ml-auto flex gap-[46px]">
            <Ic className="h-3 w-3"><path d="M0 9h18" /></Ic>
            <Ic className="h-3 w-3 text-[#ddd]"><path d="M1 1h16v16H1z" /></Ic>
            <Ic className="h-3 w-3"><path d="M0 0l18 18M18 0L0 18" /></Ic>
          </div>
        </div>
        <div className="flex h-[23px] items-center gap-4 pb-px pl-[7px] text-base text-[#777]">
          <button><Key label="文件" k="F" /></button>
          <button><Key label="设置" k="S" /></button>
        </div>
      </div>

      <div className="mt-[17px] flex items-end pl-1 text-[15px]">
        {['公式选择', '测试品种', '交易费用', '测试报告'].map((t) => (
          <button
            key={t}
            onClick={() => setTab(t)}
            className={clsx('border border-b-0 border-[#d9d9d9]', t === tab ? 'h-[26px] w-[78px] bg-white' : 'h-[23px] w-[74px]')}
          >
            {t}
          </button>
        ))}
      </div>

      <div className="mx-1 flex h-[368px] border-4 border-t-8 border-white bg-[#f0f0f0] pl-[17px] pt-2 outline-1 -outline-offset-1 outline-[#dcdcdc]">
        <div className="w-[184px]">
          <div className="h-[25px] pt-0.5"><T s="公式组(" /><u>G</u>):</div>
          <div className="flex h-[315px] flex-col border-2 border-[#828790] bg-white p-px">
            <div className="flex min-h-0 flex-1">
              <ul className="flex min-w-0 flex-1 flex-col overflow-hidden pt-[3px] whitespace-nowrap">
                {GROUPS.map((g, i) => {
                  const leaf = g[1] === '.';
                  return (
                    <li key={g} className={clsx('flex min-h-0 flex-1 items-center', !leaf && 'pl-0.5')}>
                      {leaf && (i === 3 ? <FolderOpen /> : <Folder />)}
                      <span className={clsx(leaf && 'ml-[3px] px-0.5', i === 3 && 'bg-[#ececec]')}>
                        <T s={g} />
                      </span>
                    </li>
                  );
                })}
              </ul>
              <div className="flex w-[19px] flex-col items-center bg-[#f0f0f0] py-1.5">
                <Chevron dir="up" />
                <div className="mt-5 h-[198px] w-[19px] bg-[#cdcdcd]" />
                <span className="mt-auto"><Chevron dir="down" /></span>
              </div>
            </div>
            <HScroll thumb="w-[84px]" gap="gap-8 pr-6" />
          </div>
        </div>

        <div className="ml-[5px] w-[270px]">
          <div className="-ml-9 h-[25px] pt-0.5"><T s="公式列表(" /><u>L</u>):</div>
          <div className="flex h-[315px] flex-col border-2 border-[#828790] bg-white p-0.5">
            <table className="w-full table-fixed text-left">
              <thead>
                <tr className="h-8 border-b-2 border-t border-[#a8a8a8]">
                  <th className="w-[175px] border-r-2 border-[#b8b8b8] pl-2 font-normal">
                    <span className="flex justify-between pr-3.5"><span className="text-[15px]">名称</span><span className="text-[#aaa]">/</span></span>
                  </th>
                  <th className="w-[75px] border-r-2 border-[#b8b8b8] pl-1.5 text-[15px] font-normal">类型</th>
                  <th className="overflow-hidden pl-1 text-[15px] font-normal text-[#a06820]">说</th>
                </tr>
              </thead>
              <tbody>
                {FORMULAS.map((f, i) => (
                  <tr key={f} className={clsx('h-[21px] whitespace-nowrap', i ? 'text-[#0000ff]' : 'bg-[#f0f0f0]')}>
                    <td className="overflow-hidden pl-1.5">
                      <span className="flex items-center gap-[3px]"><Sigma /><span><T s={f} /></span></span>
                    </td>
                    <td className="pl-1.5 text-[15px]">交易系统</td>
                    <td />
                  </tr>
                ))}
              </tbody>
            </table>
            <div className="flex-1" />
            <HScroll thumb="w-[76px]" gap="gap-1" />
          </div>
        </div>

        <div className="ml-1.5 w-[312px]">
          <label htmlFor="params" className="block h-[25px] pt-0.5"><T s="参数(" /><u>P</u>):</label>
          <div className="flex h-[179px] w-[300px] border-2 border-[#8c8c8c]">
            <textarea id="params" readOnly defaultValue="本指标无参数需要设置" className="flex-1 resize-none overflow-hidden border-r border-white px-0.5 text-[17px] leading-6 outline-none" />
            <div className="flex w-[22px] flex-col items-center justify-between py-1.5">
              <Chevron dir="up" className="text-[#b8b8b8]" />
              <Chevron dir="down" className="text-[#b8b8b8]" />
            </div>
          </div>
          <div className="mt-[5px] flex items-start">
            <fieldset className="flex h-[58px] w-[138px] flex-col items-end border border-[#dcdcdc] pr-[5px] pt-2.5">
              <label className="flex items-center gap-[5px]">
                <span><T s="周期:" /></span>
                <span className="relative">
                  <select className="h-6 w-[82px] appearance-none border border-[#adadad] bg-[#e1e1e1] pl-1 text-[15px] leading-5"><option>日线</option></select>
                  <span className="pointer-events-none absolute right-1.5 top-1.5"><Chevron dir="down" className="text-[#777]" /></span>
                </span>
              </label>
              <span className="mr-2.5 mt-0.5"><Check label="锁定周期" /></span>
            </fieldset>
            <div className="ml-[5px] mt-3 flex gap-[3px]">
              <Check label="价格反转" />
              <Check label="价格复权" on />
            </div>
          </div>
        </div>
      </div>

      <div className="mt-2.5 flex gap-1 pl-[3px]">
        <div className="flex h-10 w-[555px] items-center border-2 border-[#b4b4b4] pb-0.5 pl-[3px]">
          <span className="w-[72px]"><T s="测试时段:" /></span>
          <DateBox label="开始日期" value="2017/ 4/ 8" />
          <span className="w-[30px] pl-1">—&gt;</span>
          <DateBox label="结束日期" value="2022/ 5/17" />
          <label htmlFor="amount" className="ml-2.5 w-[103px]"><T s="每只品种投入:" /></label>
          <input id="amount" defaultValue="100" className="h-7 w-[71px] border-2 border-[#8a8a8a] bg-white pb-1 pl-0.5 text-[13px] outline-none" />
          <span className="ml-1 text-[15px]">万</span>
        </div>
        <div className="flex h-10 flex-1 items-center justify-between border-2 border-[#b4b4b4] pb-0.5 pl-2 pr-[7px]">
          <Radio label="普通测试报告" on />
          <Radio label="专业测试报告" />
        </div>
      </div>
      <div className="mt-3.5 flex justify-end gap-[27px] pr-[25px] text-[15px]">
        <button className="h-6 w-[94px] border border-[#a0a0a0] bg-[#e1e1e1]">公式优化</button>
        <button className="h-6 w-[94px] border border-[#a0a0a0] bg-[#e1e1e1]">开始测试</button>
      </div>
    </section>
  );
};

/* ---------- report dialog ---------- */

const SUMMARY = [
  ['测试品种:', '平安银行', '', ''],
  ['平均利润:', '0.00', '年回报率:', '0.00%(1864天)'],
  ['交易次数:', '0', '胜率:', '0.00%'],
  ['盈利交易次数:', '0', '成功率:', '0.00%'],
  ['年均信号数量:', '0.00', '年均交易次数:', '0.00次'],
  ['盈利系数:', '0.00', '均盈利/均亏损:', 'N/A'],
  ['夏普率:', '0.0000', 'MAR比率:', 'N/A'],
  ['', '', '', ''],
  ['最大连盈次数:', '0', '最大连亏次数:', '0'],
  ['最大连盈幅度:', '0.00%(0.00)', '最大连亏幅度:', '0.00%(0.00)'],
  ['最大浮动盈利:', '0.00%(0.00)', '最大浮动亏损:', '0.00%(0.00)'],
  ['最大单次盈利:', '0.00%(0.00)', '最大单次亏损:', '0.00%(0.00)'],
  ['最大回撤幅度:', '0.00%', '最大回撤时间:', '1899/12/30 00:00:00'],
];

const COLS = [['名称', 'w-[115px]'], ['利润率', 'w-[88px]'], ['年回报', 'w-[88px]'], ['胜率', 'w-[87px]'], ['交易数', 'w-[88px]'], ['成功率', 'w-[88px]'], ['最大回撤%', 'w-[112px]'], ['MAR比率', '']];
const VALUES = ['0.00%', '0.00%', '0.00%', '0', '0.00%', '0.00%', '0.00'];

const ReportDialog = () => (
  <section className="absolute right-0 top-[111px] flex h-[626px] w-[774px] flex-col overflow-hidden border-t border-[#707070] bg-[#f0f0f0] font-['Liberation_Mono','Noto_Sans_CJK_SC',monospace] text-[13px] leading-5 text-[#111]">
    <div className="flex h-[37px] shrink-0 items-center bg-white pb-1 pl-2.5 pr-[29px] font-['Noto_Sans','Noto_Sans_CJK_SC',sans-serif] text-[15px] text-[#999]">
      <svg viewBox="0 0 18 18" className="mr-[7px] w-[18px] h-[18px]">
        <path d="M1 0v17h16" stroke="#333" strokeWidth="1.500" fill="none" strokeDasharray="2 1" />
        <path d="M2 8h3v8H2z" fill="#f0f" /><path d="M5 5h4v8H5z" fill="#800080" /><path d="M9 9h4v7H9z" fill="#00f" />
        <path d="M12 4h4v6h-4z" fill="#080" /><path d="M9 11l6-2 3 4-5 4z" fill="#f00" />
      </svg>
      <h2>公式测试系统 - B.后台交易系统 : 01.MA均线交易指标-后台() 日线</h2>
      <div className="ml-auto flex gap-[46px]">
        <Ic className="h-3 w-3"><path d="M0 9h18" /></Ic>
        <Ic className="h-3 w-3"><path d="M1 1h16v16H1z" /></Ic>
      </div>
    </div>

    <div className="mt-[14px] flex shrink-0 gap-[5px] pl-4 text-[15px]">
      {['摘要', '报告', '明细', '分布', '收益', '频谱', '统计', '设定'].map((t, i) => (
        <button
          key={t}
          className={clsx(
            'h-[26px] w-[59px] border-2 pr-3.5 pt-px',
            i ? 'border-b-[#888] border-l-white border-r-[#888] border-t-white' : 'border-b-white border-l-[#888] border-r-white border-t-[#888]'
          )}
        >
          {t}
        </button>
      ))}
      <button className="-mr-2 ml-auto h-[25px] w-[60px] overflow-hidden border-2 border-[#adadad] bg-[#e4e4e4] pl-3 text-left whitespace-nowrap">保存(S</button>
    </div>

    <div className="ml-[15px] mt-2.5 h-[313px] shrink-0 border-b-2 border-l-2 border-t-2 border-[#888] border-b-[#e0e0e0] bg-white">
      <table className="table-fixed whitespace-nowrap text-right">
        <caption className="h-[42px] w-[543px] pt-0.5 text-[15px]">测试摘要</caption>
        <tbody>
          {SUMMARY.map(([a, b, c, d], i) => (
            <tr key={i} className="h-5">
              <td className="w-[113px]"><T s={a} /></td>
              <td className="w-[172px] text-[#0000ff]"><T s={b} /></td>
              <td className="w-[111px]"><T s={c} /></td>
              <td className={clsx('w-[175px]', i < 7 ? 'text-[#ff0000]' : 'text-[#0000ff]')}><T s={d} /></td>
            </tr>
          ))}
        </tbody>
      </table>
    </div>

    <div className="mt-[11px] flex-1 overflow-hidden border-y-2 border-[#98a0a8] bg-white">
      <table className="w-full table-fixed text-right">
        <thead>
          <tr className="h-[31px] border-b-2 border-[#b8b8b8] font-['Noto_Sans','Noto_Sans_CJK_SC',sans-serif] text-[15px]">
            {COLS.map(([c, w], i) => (
              <th key={c} className={clsx('pb-px font-normal', w, i === 0 && 'pl-2.5 text-left', i === 7 ? 'pr-1' : 'border-r-2 border-[#b8b8b8] pr-1.5')}>{c}</th>
            ))}
          </tr>
        </thead>
        <tbody>
          <tr className="h-[21px] text-[#008000]">
            <td className="border-r border-[#f0f0f0] pl-2 text-left text-[15px]"><span className="flex items-center gap-[3px]"><span className="w-[18px] overflow-hidden"><Folder /></span>全部综合</span></td>
            {VALUES.map((v, i) => <td key={i} className={i === 6 ? 'pr-1' : 'border-r border-[#f0f0f0] pr-1.5'}>{v}</td>)}
          </tr>
          <tr className="h-[22px] bg-[#f0f0f0]">
            <td className="border-r border-[#f0f0f0] pl-2 text-left text-[15px]">
              <span className="flex items-center gap-[3px]"><span className="w-[18px] bg-white text-center font-bold text-[#803080]">S</span>平安银行</span>
            </td>
            {VALUES.map((v, i) => <td key={i} className={i === 6 ? 'pr-1' : 'border-r border-[#f0f0f0] pr-1.5'}>{v}</td>)}
          </tr>
          {[0, 1, 2, 3, 4, 5].map((r) => (
            <tr key={r} className="h-[21px] border-b-2 border-[#f0f0f0]">
              {COLS.map(([c]) => <td key={c} className="border-r border-[#f0f0f0]" />)}
            </tr>
          ))}
        </tbody>
      </table>
    </div>
    <div className="flex h-[27px] shrink-0 items-center whitespace-nowrap pl-[26px] pt-0.5 text-[15px]">
      <span>如果对评测结果有疑问，请点击</span>
      <a href="#faq" className="ml-2.5 text-[#0066cc] underline">这里</a>
      <span className="ml-[34px] text-[13px]"><T s="看常见问题的12、21" /></span>
      <a href="#terms" className="ml-auto w-[205px] overflow-hidden text-[#0066cc] underline">点这里看报告名词术语的详细解</a>
    </div>
  </section>
);

/* ---------- bottom ---------- */

const INDEXES = [
  { n: '沪', a: '3093.7', b: '+0.65%', c: '(+19.95)', v: '3517亿', w: 'w-[285px]', gap: 'mr-[30px]', dash: 'grgrrgrr' },
  { n: '深', a: '11230', b: '+1.23%', c: '(+136.79)', v: '4383亿', w: 'w-[292px]', gap: 'mr-[25px]', dash: 'rgrrggrr' },
  { n: '300', a: '4005.9', b: '+1.25%', c: '(+49.35)', v: '2101亿', w: 'w-[298px]', gap: 'mr-2.5', dash: 'rrgrgrrr' },
];

const StatusBar = () => (
  <footer className="relative flex h-[27px] shrink-0 border-t-2 border-[#a8a8a8] bg-white pl-2 text-[17px] leading-6 text-[#222]">
    {INDEXES.map((x) => (
      <div key={x.n} className="flex shrink-0">
        <div className={clsx('flex gap-2 pt-px whitespace-nowrap', x.w)}>
          <span>{x.n}</span>
          <span className="text-[#ff2020]">{x.a}</span>
          <span className="text-[#ff2020]">{x.b}</span>
          <span className="text-[#ff2020]">{x.c}</span>
          <span>{x.v}</span>
        </div>
        <div className={clsx('w-[187px] pt-0.5', x.gap)}>
          <div className="flex h-[14px] border border-black">
            <div className="flex-1 border-r border-black bg-[#ff0000]" />
            <div className="flex-1 bg-[#1a8000]" />
          </div>
          <div className="mt-[3px] flex justify-between">
            {x.dash.split('').map((d, j) => (
              <span key={j} className={clsx('h-1 w-3', d === 'r' ? 'bg-[#ff0000]' : 'bg-[#1a8000]')} />
            ))}
          </div>
        </div>
      </div>
    ))}
    <div className="w-1 bg-[#f0f0f0]" />
    <div className="w-[104px]" />
    <div className="w-1 bg-[#f0f0f0]" />
    <div className="flex w-[33px] items-center justify-center">
      <svg viewBox="0 0 20 20" className="h-[18px] w-[18px]">
        <path d="M6 5V3q0-3 4-3t4 3v5q0 2-2 2H8q-3 0-3 3v2H3q-3 0-3-5t3-5h7V5z" fill="#111" />
        <path d="M14 15v2q0 3-4 3t-4-3v-5q0-1.500 2-1.500h4q3 0 3-3V5h2q3 0 3 5t-3 5h-7z" fill="#111" />
        <path d="M7.500 2.500h1.500M11 17.500h1.500" stroke="#fff" strokeWidth="1.5" />
      </svg>
    </div>
    <div className="w-1 bg-[#f0f0f0]" />
    <div className="flex w-[33px] items-center justify-center">
      <svg viewBox="0 0 16 20" className="h-5 w-4"><path d="M1 3v13c0 4 14 4 14 0V3z" fill="#800000" /><ellipse cx="8" cy="3.500" rx="7" ry="2.500" fill="#fff" stroke="#800000" /></svg>
    </div>
    <div className="w-1 bg-[#f0f0f0]" />
    <div className="flex items-center pl-1">
      <svg viewBox="0 0 16 16" className="h-4 w-4"><circle cx="8" cy="9" r="6" fill="#40c0d0" stroke="#222" /><path d="M3 2l8 12M11 5l-5 8" stroke="#1030a0" strokeWidth="2" /></svg>
    </div>

    {/* input method bar floats above the status bar */}
    <div className="absolute bottom-[3px] right-1 flex h-[29px] w-[190px] items-center justify-between border border-[#b8c4d8] bg-[#fafcff] pl-[27px] pr-1.5 text-[#404a60]">
      <svg viewBox="0 0 36 34" className="absolute -left-[18px] -top-1 h-[34px] w-9">
        <path d="M2 6q0-2 2-2L28 0q3 0 3 2l4 24q0 3-3 4L10 34q-3 0-3-3z" fill="#2fb01c" />
        <path d="M27 9c-6-3-16-2-15 4 1 5 14 2 14 8 0 5-9 6-14 3" fill="none" stroke="#fff" strokeWidth="5" />
      </svg>
      <span className="text-lg font-bold">五</span>
      <Ic sw={1}><path d="M12 1c4 8-2 14-10 13 5 5 14 2 14-6 0-3-2-6-4-7z" fill="currentColor" /></Ic>
      <Ic className="h-4 w-4"><circle cx="4" cy="5" r="2.500" /><path d="M12 9h3c1 3-1 6-3 7 1-2 1-4 0-7z" fill="currentColor" /></Ic>
      <Ic className="h-5 w-5" sw={1.5}><path d="M1 3h16v12H1zM5 12h8" /><path d="M4 6h10M4 9h10" strokeDasharray="1.500 1.500" /></Ic>
      <Ic sw={1}><circle cx="8" cy="4" r="3.500" fill="currentColor" /><path d="M1 17c0-9 6-9 7-8l3 3 5-2c0 5-3 7-6 7z" fill="currentColor" /></Ic>
      <Ic sw={1}><path d="M1 4c0-4 7-4 7 0v4H4C2 8 1 6 1 4zM10 4c0-4 7-4 7 0s-2 4-7 4zM1 13c0-3 2-3 7-3v4c0 4-7 4-7-1zM10 10c5 0 7 0 7 4s-7 4-7 0z" fill="currentColor" /></Ic>
    </div>
  </footer>
);

const Marks = () => (
  <svg className="pointer-events-none absolute inset-0 h-full w-full" fill="none" stroke="#ee1a1a" strokeWidth="3" strokeLinecap="round" strokeLinejoin="round">
    <path d="M300 627L315 629L335 633L352 637L368 638L383 637L400 632L420 629L440 624L460 622L474 621L500 623L521 624L524 627L550 628L647 627" />
    <path d="M1228 616L1215 614L1193 608L1163 601L1147 591L1148 583L1153 568L1170 552L1185 552L1215 563L1236 573L1254 589L1254 600L1247 610L1239 612" />
  </svg>
);

export default function App() {
  return (
    <div className="flex h-screen flex-col overflow-hidden bg-white px-2.5 pt-2.5 font-['Noto_Sans','Noto_Sans_CJK_SC',sans-serif]">
      <div className="flex min-h-0 flex-1 flex-col bg-[#f0f0f0]">
        <TitleBar />
        <MenuBar />
        <Toolbar />
        <div className="relative flex min-h-0 flex-1">
          <SidePanel />
          <ChartArea />
          <RightStrip />
          <FormulaDialog />
          <ReportDialog />
          <Marks />
        </div>
        <div className="flex h-[37px] shrink-0 items-end pl-0.5">
          <div className="h-[33px] w-[100px] border-l border-r border-t border-[#a0a0a0] pl-1.5 pt-[3px] text-base leading-6">信息窗口</div>
        </div>
        <StatusBar />
      </div>
      <div className="flex h-2.5 shrink-0 overflow-hidden bg-[#1e1e1e]">
        <div className="ml-[1053px] w-[200px] bg-[#484848]" />
        <span className="ml-auto mr-[92px] mt-0.5 text-base leading-5 text-white">21:54</span>
      </div>
    </div>
  );
}
